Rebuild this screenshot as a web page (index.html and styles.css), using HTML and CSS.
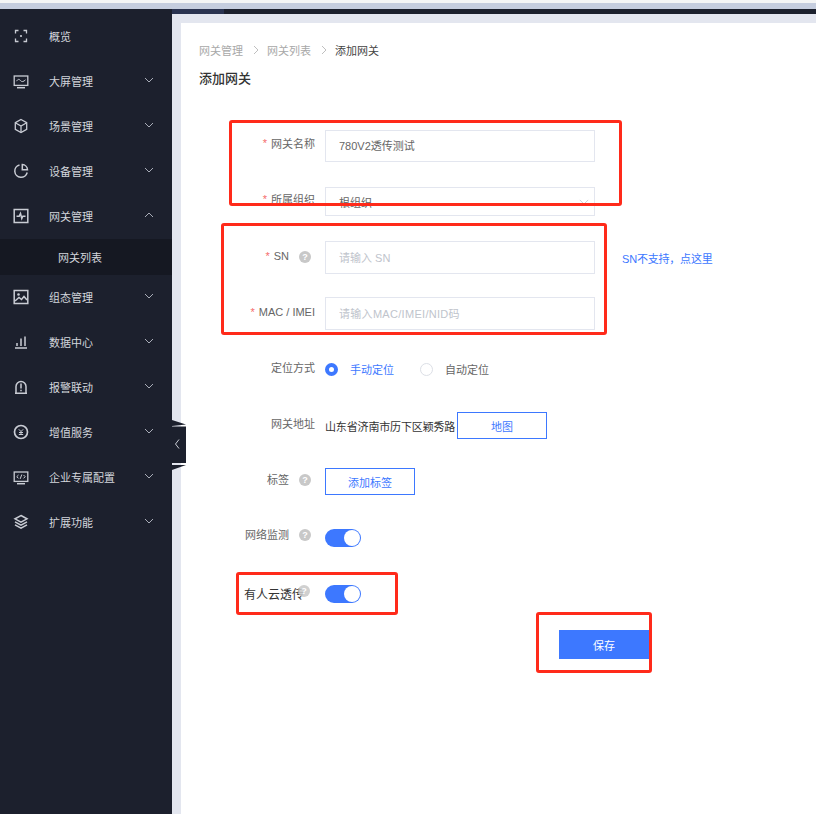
FILE: index.html
```html
<!DOCTYPE html>
<html lang="zh-CN">
<head>
<meta charset="utf-8">
<title>添加网关</title>
<link rel="stylesheet" href="styles.css">
</head>
<body>
<div class="page">
  <div class="browser-strip"></div>
  <div class="app">
    <nav class="sidebar">
      <div class="nav-row"><svg class="nav-icon" viewBox="0 0 16 16"><path d="M2.500 5.500V2.500H5.500M10.500 2.500H13.500V5.500M13.500 10.500V13.500H10.500M5.500 13.500H2.500V10.500"/><circle class="fill" cx="8" cy="8" r="1.100"/></svg><span>概览</span></div>
      <div class="nav-row"><svg class="nav-icon" viewBox="0 0 16 16"><rect x="1.200" y="3" width="13.600" height="9.400"/><path class="fine" d="M3.500 8.200C5 5.800 6.200 6 7.500 7.600S10.500 8.800 12.500 6.800"/><path class="thick" d="M4 14.700H12"/></svg><span>大屏管理</span><svg class="chev" viewBox="0 0 10 6"><path d="M1 1L5 5L9 1"/></svg></div>
      <div class="nav-row"><svg class="nav-icon" viewBox="0 0 16 16"><path d="M8 1.500L13.700 4.700V11.300L8 14.500L2.300 11.300V4.700Z"/><path d="M2.300 4.700L8 8L13.700 4.700M8 8V14.500"/></svg><span>场景管理</span><svg class="chev" viewBox="0 0 10 6"><path d="M1 1L5 5L9 1"/></svg></div>
      <div class="nav-row"><svg class="nav-icon" viewBox="0 0 16 16"><path class="thick" d="M6.500 1.900A6.300 6.300 0 1 0 14.200 9.500"/><path class="thick" d="M9.300 1.600A5.500 5.500 0 0 1 14.500 6.800H9.300Z"/></svg><span>设备管理</span><svg class="chev" viewBox="0 0 10 6"><path d="M1 1L5 5L9 1"/></svg></div>
      <div class="nav-row"><svg class="nav-icon" viewBox="0 0 16 16"><rect class="thick" x="1.200" y="1.500" width="13.600" height="13"/><path class="thick" d="M3.500 8.300H6.200L7.500 5.500L8.800 10.500L9.800 8.300H12.500"/></svg><span>网关管理</span><svg class="chev" viewBox="0 0 10 6"><path d="M1 5L5 1L9 5"/></svg></div>
      <div class="nav-sub">网关列表</div>
      <div class="nav-row"><svg class="nav-icon" viewBox="0 0 16 16"><rect class="thick" x="1.200" y="1.500" width="13.600" height="13"/><circle class="fill" cx="5.500" cy="5.500" r="1.300"/><path class="thick" d="M2 12L6 8.500L8.500 10.500L11 7.500L14 11"/></svg><span>组态管理</span><svg class="chev" viewBox="0 0 10 6"><path d="M1 1L5 5L9 1"/></svg></div>
      <div class="nav-row"><svg class="nav-icon" viewBox="0 0 16 16"><path class="thick" d="M2 14H14M4 12V9M8 12V4.500M12 12V2.500"/></svg><span>数据中心</span><svg class="chev" viewBox="0 0 10 6"><path d="M1 1L5 5L9 1"/></svg></div>
      <div class="nav-row"><svg class="nav-icon" viewBox="0 0 16 16"><path class="thick" d="M3 14V7.500A5 5 0 0 1 13 7.500V14"/><path class="thick" d="M2 14.300H14M8 4.500V9.500M8 10.800V12.300"/></svg><span>报警联动</span><svg class="chev" viewBox="0 0 10 6"><path d="M1 1L5 5L9 1"/></svg></div>
      <div class="nav-row"><svg class="nav-icon" viewBox="0 0 16 16"><circle class="heavy" cx="8" cy="8" r="6.500"/><path class="fine" d="M5.800 5.300L8 7.500L10.200 5.300M8 7.500V10.500M5.800 10.500H10.200M6 8.500H10"/></svg><span>增值服务</span><svg class="chev" viewBox="0 0 10 6"><path d="M1 1L5 5L9 1"/></svg></div>
      <div class="nav-row"><svg class="nav-icon" viewBox="0 0 16 16"><rect x="1.200" y="3" width="13.600" height="9.400"/><path class="fine" d="M5.500 6L3.800 7.700L5.500 9.400M10.500 6L12.200 7.700L10.500 9.400M8.800 5.500L7.200 9.900"/><path class="thick" d="M4 14.700H12"/></svg><span>企业专属配置</span><svg class="chev" viewBox="0 0 10 6"><path d="M1 1L5 5L9 1"/></svg></div>
      <div class="nav-row"><svg class="nav-icon" viewBox="0 0 16 16"><path class="thick" d="M8 1.500L14 4.800L8 8.100L2 4.800Z"/><path class="thick" d="M2 7.800L8 11.100L14 7.800M2 10.800L8 14.100L14 10.800"/></svg><span>扩展功能</span><svg class="chev" viewBox="0 0 10 6"><path d="M1 1L5 5L9 1"/></svg></div>
    </nav>
    <div class="main">
      <div class="top-band"><div class="top-band-light"></div></div>
      <div class="content-bg">
        <main class="card">
          <div class="breadcrumb">
            <span>网关管理</span><svg class="crumb-sep" viewBox="0 0 6 10"><path d="M1 1L5 5L1 9"/></svg><span>网关列表</span><svg class="crumb-sep" viewBox="0 0 6 10"><path d="M1 1L5 5L1 9"/></svg><span class="crumb-current">添加网关</span>
          </div>
          <h1 class="title">添加网关</h1>
          <form class="form">
            <div class="row h56">
              <div class="label pb6"><span class="req">*</span> 网关名称</div>
              <input class="input tall-32 has-value" value="780V2透传测试">
            </div>
            <div class="row h55">
              <div class="label"><span class="req">*</span> 所属组织</div>
              <div class="input select tall-29"><span>根组织</span><svg class="select-chev" viewBox="0 0 12 7"><path d="M1 1L6 6L11 1"/></svg></div>
            </div>
            <div class="row h57">
              <div class="label pb3"><span class="req">*</span> SN<i class="help">?</i></div>
              <input class="input tall-33" placeholder="请输入 SN">
              <a class="side-link">SN不支持，点这里</a>
            </div>
            <div class="row h55">
              <div class="label pb3"><span class="req">*</span> MAC / IMEI</div>
              <input class="input tall-33 wide-hint" placeholder="请输入MAC/IMEI/NID码">
            </div>
            <div class="row h56">
              <div class="label">定位方式</div>
              <div class="radios">
                <span class="radio radio-on"></span><span class="radio-text radio-text-on">手动定位</span>
                <span class="radio"></span><span class="radio-text">自动定位</span>
              </div>
            </div>
            <div class="row h57">
              <div class="label pb6">网关地址</div>
              <span class="address">山东省济南市历下区颖秀路</span><button class="outline-btn" type="button">地图</button>
            </div>
            <div class="row h55">
              <div class="label">标签<i class="help">?</i></div>
              <button class="outline-btn" type="button">添加标签</button>
            </div>
            <div class="row h58">
              <div class="label pb8">网络监测<i class="help">?</i></div>
              <span class="switch"></span>
            </div>
            <div class="row h54">
              <div class="label label-over"><b>有人云透传</b><i class="help help-over">?</i></div>
              <span class="switch"></span>
            </div>
            <div class="save-row"><button class="save-btn" type="button">保存</button></div>
          </form>
        </main>
      </div>
    </div>
  </div>
  <svg class="collapse-tab" viewBox="0 0 14 50"><path d="M0 0L14 4.500L0 6Z"/><path d="M0 6.500H14V43H0Z"/><path d="M0 45H14L0 50Z"/><path class="collapse-arrow" d="M7 19.500L3.500 24L7 28.500"/></svg>
  <div class="mark mark-1"></div>
  <div class="mark mark-2"></div>
  <div class="mark mark-3"></div>
  <div class="mark mark-4"></div>
</div>
</body>
</html>
```
FILE: styles.css
```css
* { box-sizing: border-box; }
html, body { margin: 0; padding: 0; }
body { font-family: "Liberation Sans", "Noto Sans CJK SC", sans-serif; font-size: 11px; color: #666; background: #fff; }
.page { position: relative; width: 816px; height: 814px; overflow: hidden; display: flex; flex-direction: column; }
.browser-strip { height: 9px; flex: none; background: #c5cdde; border-top: 3px solid #f4f5f5; }
.app { flex: 1; display: flex; min-height: 0; }

.sidebar { width: 172px; flex: none; background: #1c202d; padding-top: 5px; color: #d3d6dc; }
.nav-row { position: relative; height: 45px; display: flex; align-items: center; padding-left: 49px; line-height: 1; }
.nav-row > span { position: relative; top: 1px; }
.nav-icon { position: absolute; left: 13px; top: 14px; width: 16px; height: 16px; fill: none; stroke: #c9ccd4; stroke-width: 1.300; }
.nav-icon .fine { stroke-width: 1; }
.nav-icon .thick { stroke-width: 1.500; }
.nav-icon .heavy { stroke-width: 1.700; }
.nav-icon .fill { fill: #c9ccd4; stroke: none; }
.chev { position: absolute; left: 144px; top: 18px; width: 10px; height: 6px; fill: none; stroke: #a9adb8; stroke-width: 1; }
.nav-sub { height: 36px; background: #151822; display: flex; align-items: center; padding-left: 58px; }

.main { flex: 1; min-width: 0; display: flex; flex-direction: column; }
.top-band { height: 5px; flex: none; background: #1c202d; }
.top-band-light { width: 52px; height: 100%; background: #2a3350; }
.content-bg { flex: 1; min-height: 0; background: #e3e6ef; padding: 9px 0 0 9px; }
.card { height: 100%; background: #fff; padding: 0 0 0 18px; }

.breadcrumb { height: 54px; display: flex; align-items: center; color: #a8a8a8; }
.crumb-sep { width: 6px; height: 10px; margin: 0 8px 0 10px; fill: none; stroke: #bfbfbf; stroke-width: 1; }
.crumb-current { color: #444; }
.title { margin: 0; height: 1px; line-height: 1px; font-size: 13px; font-weight: 500; color: #333; transform: translateY(1px); }

.form { margin: 40px 0 0 -18px; }
.row { display: flex; align-items: center; }
.h54 { height: 54px; } .h55 { height: 55px; } .h56 { height: 56px; } .h57 { height: 57px; } .h58 { height: 58px; }
.label { width: 134px; flex: none; margin-right: 10px; padding-bottom: 5px; display: flex; justify-content: flex-end; align-items: center; white-space: pre; color: #666; }
.pb3 { padding-bottom: 3px; } .pb6 { padding-bottom: 6px; } .pb8 { padding-bottom: 8px; }
.req { color: #f56c6c; margin-right: 1px; }
.help { width: 12px; height: 12px; margin: 2px 4px 0 10px; border-radius: 50%; background: #c8c8c8; color: #fff; font: normal bold 9px/12px "Liberation Sans", sans-serif; text-align: center; }
.label-over { padding-bottom: 1px; color: #333; }
.label-over b { font-weight: 400; font-size: 12px; margin-right: -6px; }
.help-over { margin: -5px 5px 0 0; opacity: .85; }

.input { width: 270px; flex: none; padding: 0 13px; border: 1px solid #e3e6ef; border-radius: 0; background: #fff; font: 11px "Liberation Sans", "Noto Sans CJK SC", sans-serif; color: #666; outline: none; }
.input::placeholder { color: #c0c4cc; }
.has-value { padding-bottom: 2px; }
.wide-hint::placeholder { letter-spacing: .3px; }
.tall-29 { height: 29px; } .tall-32 { height: 32px; } .tall-33 { height: 33px; }
.select { display: flex; align-items: center; justify-content: space-between; }
.select-chev { width: 10px; height: 6px; margin-right: -8px; fill: none; stroke: #c0c4cc; stroke-width: 1; }
.side-link { margin-left: 27px; color: #3d78ff; letter-spacing: -.2px; }

.radios { display: flex; align-items: center; }
.radio { width: 13px; height: 13px; border: 1px solid #dcdfe6; border-radius: 50%; background: #fff; }
.radio-on { border: 4px solid #3d78ff; }
.radio-text { margin: 0 26px 0 12px; color: #666; }
.radio-text-on { color: #3d78ff; }

.address { width: 132px; flex: none; color: #333; white-space: nowrap; letter-spacing: -.15px; }
.outline-btn { width: 90px; height: 27px; padding: 0; border: 1px solid #3d78ff; border-radius: 0; background: #fff; color: #3d78ff; font: 11px "Liberation Sans", "Noto Sans CJK SC", sans-serif; }

.switch { position: relative; width: 36px; height: 18px; border-radius: 9px; background: #3d78ff; }
.switch::after { content: ""; position: absolute; right: 1px; top: 1px; width: 16px; height: 16px; border-radius: 50%; background: #fff; }

.save-row { margin: 9px 0 0 378px; }
.save-btn { width: 90px; height: 29px; padding: 0; border: 0; border-radius: 0; background: #3d78ff; color: #fff; font: 11px "Liberation Sans", "Noto Sans CJK SC", sans-serif; }

.collapse-tab { position: absolute; left: 172px; top: 420px; width: 14px; height: 50px; fill: #1c202d; }
.collapse-arrow { fill: none; stroke: #c9ccd4; stroke-width: 1; }

.mark { position: absolute; border: 3px solid #ff2a1a; border-radius: 3px; pointer-events: none; }
.mark-1 { left: 229px; top: 120px; width: 393px; height: 86px; }
.mark-2 { left: 221px; top: 223px; width: 386px; height: 112px; }
.mark-3 { left: 236px; top: 572px; width: 162px; height: 43px; }
.mark-4 { left: 536px; top: 612px; width: 116px; height: 61px; }
```
